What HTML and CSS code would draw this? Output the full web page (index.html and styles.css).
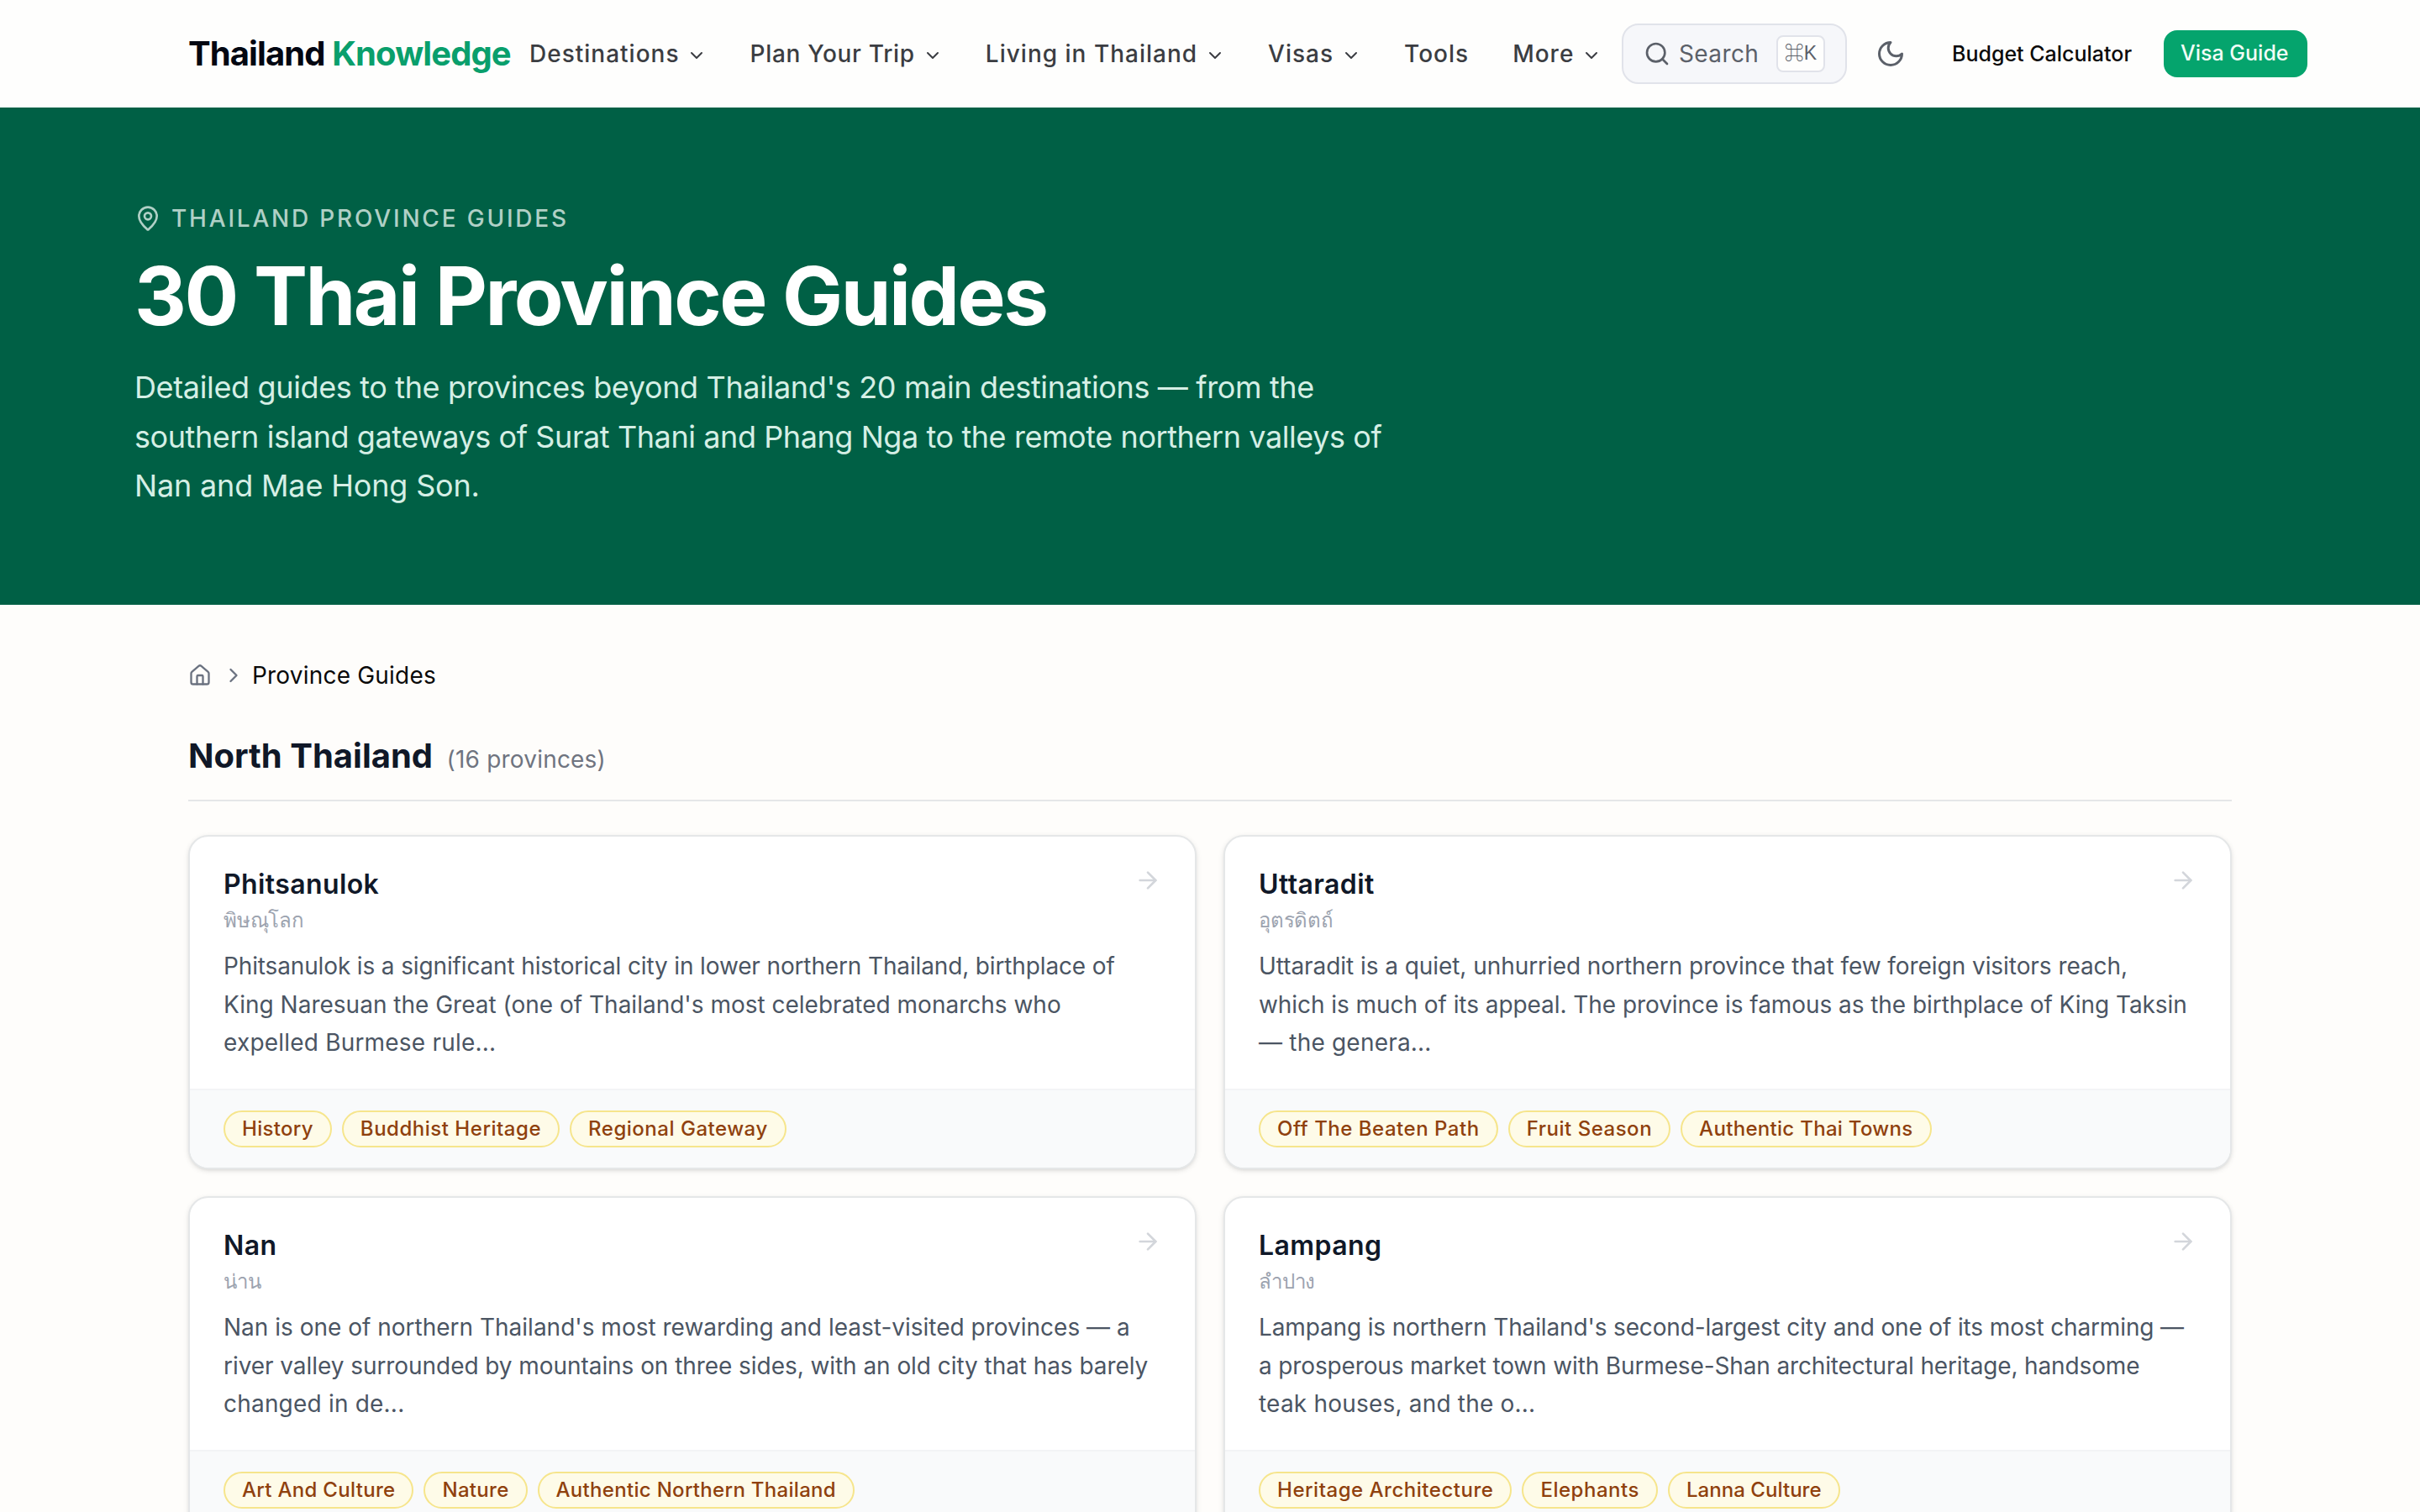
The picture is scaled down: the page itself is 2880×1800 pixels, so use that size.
FILE: index.html
```
<!DOCTYPE html>
<html lang="en">
<head>
	<meta charset="utf-8">
	<title>30 Thai Province Guides | Thailand Knowledge</title>
	<link rel="stylesheet" href="styles.css">
</head>
<body>
	<!-- shared icons -->
	<svg class="sprite" width="0" height="0">
		<symbol id="chevron-down" viewBox="0 0 24 24"><path d="m6 9 6 6 6-6"/></symbol>
		<symbol id="chevron-right" viewBox="0 0 24 24"><path d="m9 18 6-6-6-6"/></symbol>
		<symbol id="arrow-right" viewBox="0 0 24 24"><path d="M5 12h14"/><path d="m12 5 7 7-7 7"/></symbol>
		<symbol id="search" viewBox="0 0 24 24"><circle cx="11" cy="11" r="8"/><path d="m21 21-4.3-4.3"/></symbol>
		<symbol id="moon" viewBox="0 0 24 24"><path d="M12 3a6 6 0 0 0 9 9 9 9 0 1 1-9-9Z"/></symbol>
		<symbol id="map-pin" viewBox="0 0 24 24"><path d="M20 10c0 4.993-5.539 10.193-7.399 11.799a1 1 0 0 1-1.202 0C9.539 20.193 4 14.993 4 10a8 8 0 0 1 16 0"/><circle cx="12" cy="10" r="3"/></symbol>
		<symbol id="house" viewBox="0 0 24 24"><path d="M15 21v-8a1 1 0 0 0-1-1h-4a1 1 0 0 0-1 1v8"/><path d="M3 10a2 2 0 0 1 .709-1.528l7-5.999a2 2 0 0 1 2.582 0l7 5.999A2 2 0 0 1 21 10v9a2 2 0 0 1-2 2H5a2 2 0 0 1-2-2z"/></symbol>
	</svg>

	<header class="header">
		<a class="logo">Thailand <span>Knowledge</span></a>
		<nav class="nav">
			<a>Destinations<svg class="icon"><use href="#chevron-down"/></svg></a>
			<a class="narrow">Plan Your Trip<svg class="icon"><use href="#chevron-down"/></svg></a>
			<a>Living in Thailand<svg class="icon"><use href="#chevron-down"/></svg></a>
			<a>Visas<svg class="icon"><use href="#chevron-down"/></svg></a>
			<a>Tools</a>
			<a>More<svg class="icon"><use href="#chevron-down"/></svg></a>
		</nav>
		<div class="search"><svg class="icon"><use href="#search"/></svg><span>Search</span><kbd>⌘K</kbd></div>
		<svg class="icon moon"><use href="#moon"/></svg>
		<a class="budget">Budget Calculator</a>
		<a class="visa-btn">Visa Guide</a>
	</header>

	<section class="hero">
		<div class="eyebrow"><svg class="icon"><use href="#map-pin"/></svg>Thailand Province Guides</div>
		<h1>30 Thai Province Guides</h1>
		<p>Detailed guides to the provinces beyond Thailand's 20 main destinations — from the<br><span class="mid">southern island gateways of Surat Thani and Phang Nga to the remote northern valleys of</span><br><span class="last">Nan and Mae Hong Son.</span></p>
	</section>

	<main class="main">
		<nav class="crumbs">
			<svg class="icon home"><use href="#house"/></svg>
			<svg class="icon"><use href="#chevron-right"/></svg>
			<span>Province Guides</span>
		</nav>
		<h2 class="region">North Thailand <span>(16 provinces)</span></h2>
		<div class="grid">
			<article class="card">
				<div class="card-body">
					<svg class="icon arrow"><use href="#arrow-right"/></svg>
					<h3>Phitsanulok</h3>
					<div class="thai" lang="th">พิษณุโลก</div>
					<p><span class="tighter">Phitsanulok is a significant historical city in lower northern Thailand, birthplace of</span><br>King Naresuan the Great (one of Thailand's most celebrated monarchs who<br><span class="loose">expelled Burmese rule...</span></p>
				</div>
				<div class="tags"><span>History</span><span class="wide">Buddhist Heritage</span><span class="wide">Regional Gateway</span></div>
			</article>
			<article class="card">
				<div class="card-body">
					<svg class="icon arrow"><use href="#arrow-right"/></svg>
					<h3>Uttaradit</h3>
					<div class="thai" lang="th">อุตรดิตถ์</div>
					<p><span class="tight">Uttaradit is a quiet, unhurried northern province that few foreign visitors reach,<br>which is much of its appeal. The province is famous as the birthplace of King Taksin</span><br><span class="loose">— the genera...</span></p>
				</div>
				<div class="tags"><span class="wide">Off The Beaten Path</span><span class="wide">Fruit Season</span><span>Authentic Thai Towns</span></div>
			</article>
			<article class="card">
				<div class="card-body">
					<svg class="icon arrow"><use href="#arrow-right"/></svg>
					<h3>Nan</h3>
					<div class="thai" lang="th">น่าน</div>
					<p>Nan is one of northern Thailand's most rewarding and least-visited provinces — a<br><span class="tight">river valley surrounded by mountains on three sides, with an old city that has barely</span><br><span class="loose">changed in de...</span></p>
				</div>
				<div class="tags"><span>Art And Culture</span><span>Nature</span><span>Authentic Northern Thailand</span></div>
			</article>
			<article class="card">
				<div class="card-body">
					<svg class="icon arrow"><use href="#arrow-right"/></svg>
					<h3>Lampang</h3>
					<div class="thai" lang="th">ลำปาง</div>
					<p><span class="tighter">Lampang is northern Thailand's second-largest city and one of its most charming —<br>a prosperous market town with Burmese-Shan architectural heritage, handsome</span><br><span class="loose">teak houses, and the o...</span></p>
				</div>
				<div class="tags"><span class="wide">Heritage Architecture</span><span class="wide">Elephants</span><span class="narrow">Lanna Culture</span></div>
			</article>
		</div>
	</main>
</body>
</html>
```

FILE: styles.css
```
*{
	box-sizing: border-box;
	margin: 0;
	padding: 0;
}
html{
	height: 100%;
	overflow: hidden;
}
body{
	height: 1800px;
	overflow: hidden;
	background: #fefdfb;
	color: #101828;
	font-family: Inter, "Noto Sans", sans-serif;
	font-size: 28px;
	line-height: 40px;
	white-space: nowrap;
}
.sprite{
	display: block;
}
.icon{
	width: 32px;
	height: 32px;
	flex: none;
	fill: none;
	stroke: currentColor;
	stroke-width: 2;
	stroke-linecap: round;
	stroke-linejoin: round;
}

/* header */
.header{
	height: 128px;
	padding-left: 224px;
	display: flex;
	align-items: center;
	background: #fefefd;
}
.logo{
	width: 406px;
	font-size: 40px;
	font-weight: 700;
	letter-spacing: -.9px;
	color: #030712;
}
.logo span{
	color: #099f6c;
}
.nav{
	width: 1300px;
	display: flex;
	gap: 51px;
	font-weight: 500;
	letter-spacing: 1px;
	color: #3b3d42;
}
.nav a{
	display: flex;
	align-items: center;
	gap: 9px;
}
.nav .narrow{
	letter-spacing: .7px;
}
.nav .icon{
	width: 24px;
	height: 24px;
	margin-top: 4px;
}
.nav a:last-child{
	margin-left: 1px;
}
.search{
	width: 268px;
	height: 72px;
	padding: 0 24px;
	display: flex;
	align-items: center;
	border: 2px solid #e1e3ea;
	border-radius: 20px;
	background: #f6f7fa;
	color: #5b6069;
	letter-spacing: .4px;
}
.search span{
	margin-left: 10px;
}
.search kbd{
	width: 58px;
	height: 44px;
	margin-left: auto;
	border: 2px solid #e1e3ea;
	border-radius: 8px;
	background: #fefefd;
	font-family: "Liberation Sans", "Noto Sans CJK JP", sans-serif;
	font-size: 23px;
	line-height: 38px;
	text-align: center;
	letter-spacing: 0;
}
.moon{
	width: 36px;
	height: 36px;
	margin-left: 34px;
	color: #5b6069;
}
.budget{
	width: 252px;
	margin-left: 55px;
	font-size: 25px;
	font-weight: 500;
	color: #0a0a0a;
}
.visa-btn{
	width: 171px;
	height: 56px;
	padding-left: 20px;
	border-radius: 16px;
	background: #05a46d;
	color: #f0fdf6;
	font-size: 25px;
	font-weight: 500;
	line-height: 54px;
}

/* hero */
.hero{
	height: 592px;
	padding: 112px 160px;
	background: #006045;
	color: #fff;
}
.eyebrow{
	display: flex;
	align-items: center;
	gap: 12px;
	font-weight: 500;
	letter-spacing: 2.8px;
	text-transform: uppercase;
	color: #b0d0c6;
}
.hero h1{
	margin: 24px 0 32px;
	font-size: 96px;
	line-height: 96px;
	letter-spacing: -2.5px;
}
.hero p{
	font-size: 36px;
	line-height: 58.5px;
	letter-spacing: -.36px;
	color: #d5efe5;
}
.hero .mid{
	letter-spacing: -.42px;
}
.hero .last{
	letter-spacing: -.17px;
}

/* listing */
.main{
	padding: 64px 224px;
}
.crumbs{
	height: 40px;
	margin-bottom: 48px;
	display: flex;
	align-items: center;
	color: #6b7280;
}
.crumbs .icon{
	width: 28px;
	height: 28px;
}
.crumbs .home + .icon{
	margin: 0 8px 0 12px;
}
.crumbs span{
	color: #0a0a0a;
	letter-spacing: .2px;
}
.region{
	height: 82px;
	margin-bottom: 40px;
	border-bottom: 2px solid #e5e7e8;
	font-size: 40px;
	line-height: 56px;
}
.region span{
	margin-left: 7px;
	font-size: 28px;
	font-weight: 400;
	letter-spacing: .2px;
	color: #6f7480;
}
.grid{
	display: grid;
	grid-template-columns: 1fr 1fr;
	gap: 32px;
}
.card{
	height: 398px;
	overflow: hidden;
	border: 2px solid #e5e7e8;
	border-radius: 24px;
	background: #fff;
	box-shadow: 0 2px 6px rgba(0,0,0,.1), 0 2px 4px -2px rgba(0,0,0,.1);
}
.card-body{
	height: 300px;
	padding: 41px 40px 0;
}
.arrow{
	width: 32px;
	height: 32px;
	margin-top: -5px;
	float: right;
	color: #d3d6db;
}
.card h3{
	font-size: 32px;
	font-weight: 600;
	line-height: 32px;
	letter-spacing: .4px;
}
.thai{
	height: 59px;
	padding-top: 11px;
	font-size: 24px;
	line-height: 32px;
	letter-spacing: -.2px;
	color: #9ca3af;
}
.card p{
	line-height: 45.5px;
	color: #4b5563;
}
.card .tight{
	letter-spacing: -.06px;
}
.card .tighter{
	letter-spacing: -.14px;
}
.card .loose{
	letter-spacing: .2px;
}
.tags{
	height: 94px;
	padding: 24px 40px;
	display: flex;
	gap: 12px;
	border-top: 2px solid #f3f4f6;
	background: #f9fafb;
}
.tags span{
	height: 44px;
	padding: 0 20px;
	border: 2px solid #f6e58c;
	border-radius: 22px;
	background: #fefbe8;
	font-size: 24px;
	font-weight: 500;
	line-height: 40px;
	letter-spacing: .3px;
	color: #8f410e;
}
.tags .wide{
	letter-spacing: .52px;
}
.tags .narrow{
	letter-spacing: .05px;
}
```
